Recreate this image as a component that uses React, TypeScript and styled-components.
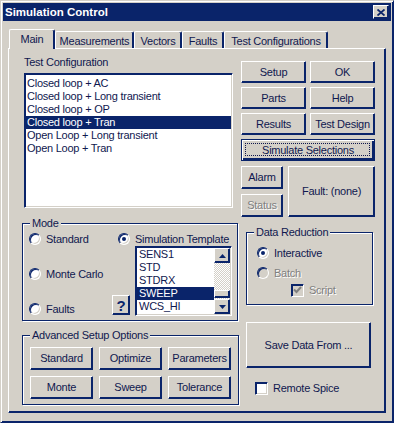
import styled, { createGlobalStyle } from 'styled-components';

const face = '#d4d0c8';
const navy = '#0a246a';
const ink = '#10184f';
const grey = '#808080';

const GlobalStyle = createGlobalStyle`
  * { box-sizing: border-box; }
  html, body { margin: 0; padding: 0; background: ${face}; }
  body {
    font-family: 'Liberation Sans', Arial, sans-serif;
    font-size: 11px;
    line-height: 13px;
    letter-spacing: -0.25px;
    color: ${ink};
  }
`;

const tabs = [
  { label: 'Main', width: 46, active: true },
  { label: 'Measurements', width: 79 },
  { label: 'Vectors', width: 48 },
  { label: 'Faults', width: 42 },
  { label: 'Test Configurations', width: 104 },
];

const configurations = [
  'Closed loop + AC',
  'Closed loop + Long transient',
  'Closed loop + OP',
  'Closed loop + Tran',
  'Open Loop + Long transient',
  'Open Loop + Tran',
];

const templates = ['SENS1', 'STD', 'STDRX', 'SWEEP', 'WCS_HI'];

function Arrow({ down }: { down?: boolean }) {
  return (
    <svg width="7" height="4" viewBox="0 0 7 4">
      <path d={down ? 'M0 0H7L3.5 4Z' : 'M0 4H7L3.5 0Z'} fill={navy} />
    </svg>
  );
}

function Check({ color }: { color: string }) {
  return (
    <svg width="9" height="8" viewBox="0 0 9 8">
      <path d="M1 3.5L3.5 6L8 1" fill="none" stroke={color} strokeWidth="2" />
    </svg>
  );
}

function App() {
  return (
    <>
      <GlobalStyle />
      <Styled.Window>
        <Styled.TitleBar>
          <Styled.Title>Simulation Control</Styled.Title>
          <Styled.CloseButton>
            <svg width="8" height="7" viewBox="0 0 8 7">
              <path d="M0.5 0.5L7.5 6.5M7.5 0.5L0.5 6.5" stroke={navy} strokeWidth="1.8" />
            </svg>
          </Styled.CloseButton>
        </Styled.TitleBar>

        <Styled.Body>
          <Styled.TabRow>
            {tabs.map((tab) => (
              <Styled.Tab key={tab.label} $active={!!tab.active} $width={tab.width}>
                {tab.label}
              </Styled.Tab>
            ))}
          </Styled.TabRow>

          <Styled.Panel>
            <Styled.LeftColumn>
              <Styled.Label>Test Configuration</Styled.Label>
              <Styled.ConfigList>
                <Styled.Rows $padTop={2}>
                  {configurations.map((c) => (
                    <Styled.Item key={c} $selected={c === 'Closed loop + Tran'} $pad={1}>
                      {c}
                    </Styled.Item>
                  ))}
                </Styled.Rows>
              </Styled.ConfigList>

              <Styled.ModeGroup>
                <Styled.Legend>Mode</Styled.Legend>
                <Styled.RadioColumn>
                  <Styled.Choice>
                    <Styled.Radio />
                    Standard
                  </Styled.Choice>
                  <Styled.Choice>
                    <Styled.Radio />
                    Monte Carlo
                  </Styled.Choice>
                  <Styled.Choice>
                    <Styled.Radio />
                    Faults
                  </Styled.Choice>
                </Styled.RadioColumn>
                <Styled.TemplateColumn>
                  <Styled.Choice>
                    <Styled.Radio $checked />
                    Simulation Template
                  </Styled.Choice>
                  <Styled.TemplateRow>
                    <Styled.HelpButton>?</Styled.HelpButton>
                    <Styled.TemplateList>
                      <Styled.Rows $padTop={0}>
                        {templates.map((t) => (
                          <Styled.Item key={t} $selected={t === 'SWEEP'} $pad={2}>
                            {t}
                          </Styled.Item>
                        ))}
                      </Styled.Rows>
                      <Styled.ScrollBar>
                        <Styled.ScrollButton>
                          <Arrow />
                        </Styled.ScrollButton>
                        <Styled.Track>
                          <Styled.Thumb />
                        </Styled.Track>
                        <Styled.ScrollButton>
                          <Arrow down />
                        </Styled.ScrollButton>
                      </Styled.ScrollBar>
                    </Styled.TemplateList>
                  </Styled.TemplateRow>
                </Styled.TemplateColumn>
              </Styled.ModeGroup>

              <Styled.AdvancedGroup>
                <Styled.Legend>Advanced Setup Options</Styled.Legend>
                {['Standard', 'Optimize', 'Parameters', 'Monte', 'Sweep', 'Tolerance'].map((b) => (
                  <Styled.Button key={b}>{b}</Styled.Button>
                ))}
              </Styled.AdvancedGroup>
            </Styled.LeftColumn>

            <Styled.RightColumn>
              <Styled.ButtonGrid>
                <Styled.Button>Setup</Styled.Button>
                <Styled.Button>OK</Styled.Button>
                <Styled.Button>Parts</Styled.Button>
                <Styled.Button>Help</Styled.Button>
                <Styled.Button>Results</Styled.Button>
                <Styled.Button>Test Design</Styled.Button>
                <Styled.DefaultButton>Simulate Selections</Styled.DefaultButton>
              </Styled.ButtonGrid>

              <Styled.AlarmRow>
                <Styled.AlarmStack>
                  <Styled.Button>Alarm</Styled.Button>
                  <Styled.Button disabled>
                    <Styled.Disabled>Status</Styled.Disabled>
                  </Styled.Button>
                </Styled.AlarmStack>
                <Styled.Button>Fault: (none)</Styled.Button>
              </Styled.AlarmRow>

              <Styled.ReductionGroup>
                <Styled.Legend>Data Reduction</Styled.Legend>
                <Styled.Choice>
                  <Styled.Radio $checked />
                  Interactive
                </Styled.Choice>
                <Styled.Choice>
                  <Styled.Radio $disabled />
                  <Styled.Disabled>Batch</Styled.Disabled>
                </Styled.Choice>
                <Styled.ScriptChoice>
                  <Styled.CheckBox $disabled>
                    <Check color={grey} />
                  </Styled.CheckBox>
                  <Styled.Disabled>Script</Styled.Disabled>
                </Styled.ScriptChoice>
              </Styled.ReductionGroup>

              <Styled.SaveButton>Save Data From ...</Styled.SaveButton>

              <Styled.RemoteChoice>
                <Styled.CheckBox />
                Remote Spice
              </Styled.RemoteChoice>
            </Styled.RightColumn>
          </Styled.Panel>
        </Styled.Body>
      </Styled.Window>
    </>
  );
}

export default App;

const raised = `
  background: ${face};
  border: 1px solid;
  border-color: #fff ${navy} ${navy} #fff;
  box-shadow: inset -1px -1px 0 ${navy};
`;

const sunken = `
  border: 1px solid;
  border-color: ${navy} #fff #fff ${navy};
  box-shadow: inset 1px 1px 0 ${navy}, inset -1px -1px 0 ${face};
`;

const Group = styled.div`
  position: relative;
  border: 1px solid ${navy};
  box-shadow: inset 1px 1px 0 #fff, 1px 1px 0 #fff;
`;

const Styled = {
  Window: styled.div`
    width: 394px;
    height: 423px;
    background: ${face};
    border: 1px solid;
    border-color: ${face} ${navy} ${navy} ${face};
    box-shadow: inset 1px 1px 0 #fff, inset -1px -1px 0 ${navy};
    padding: 2px;
    display: flex;
    flex-direction: column;
  `,
  TitleBar: styled.div`
    height: 18px;
    background: ${navy};
    display: flex;
    align-items: center;
    justify-content: space-between;
    padding: 0 2px;
  `,
  Title: styled.span`
    color: #fff;
    font-weight: bold;
    font-size: 11.5px;
    letter-spacing: 0;
  `,
  CloseButton: styled.span`
    ${raised}
    width: 16px;
    height: 14px;
    display: flex;
    align-items: center;
    justify-content: center;
  `,
  Body: styled.div`
    display: flex;
    flex-direction: column;
    padding: 8px 5px 0;
  `,
  TabRow: styled.div`
    display: flex;
    align-items: flex-end;
    height: 19px;
    padding-left: 1px;
  `,
  Tab: styled.div<{ $active: boolean; $width: number }>`
    position: relative;
    z-index: ${({ $active }) => ($active ? 1 : 0)};
    width: ${({ $width }) => $width}px;
    height: ${({ $active }) => ($active ? '20px' : '17px')};
    margin-bottom: ${({ $active }) => ($active ? '-1px' : '0')};
    background: ${face};
    border-top: 1px solid #fff;
    border-left: 1px solid #fff;
    border-right: 1px solid ${navy};
    border-radius: 2px 2px 0 0;
    box-shadow: inset -1px 0 0 ${navy};
    display: flex;
    align-items: center;
    justify-content: center;
    padding-top: ${({ $active }) => ($active ? '0' : '2px')};
    white-space: nowrap;
  `,
  Panel: styled.div`
    position: relative;
    height: 365px;
    border-top: 1px solid #fff;
    border-left: 1px solid #fff;
    border-right: 1px solid ${navy};
    border-bottom: 1px solid ${navy};
    box-shadow: inset -1px -1px 0 ${navy};
    display: grid;
    grid-template-columns: 217px 134px;
    column-gap: 2px;
    align-items: start;
    padding: 7px 0 0 13px;
  `,
  LeftColumn: styled.div`
    display: flex;
    flex-direction: column;
  `,
  RightColumn: styled.div`
    display: flex;
    flex-direction: column;
  `,
  Label: styled.div`
    margin-left: 2px;
    height: 13px;
  `,
  ConfigList: styled.div`
    ${sunken}
    background: #fff;
    width: 209px;
    height: 135px;
    margin: 4px 0 0 2px;
    padding: 1px;
    display: flex;
    overflow: hidden;
  `,
  Rows: styled.div<{ $padTop: number }>`
    flex: 1;
    min-width: 0;
    padding-top: ${({ $padTop }) => $padTop}px;
  `,
  Item: styled.div<{ $selected?: boolean; $pad: number }>`
    height: 13px;
    line-height: 13px;
    padding-left: ${({ $pad }) => $pad}px;
    white-space: nowrap;
    background: ${({ $selected }) => ($selected ? navy : 'transparent')};
    color: ${({ $selected }) => ($selected ? '#fff' : ink)};
  `,
  Legend: styled.span`
    position: absolute;
    top: -7px;
    left: 7px;
    padding: 0 2px;
    height: 13px;
    background: ${face};
    white-space: nowrap;
  `,
  ModeGroup: styled(Group)`
    width: 216px;
    height: 98px;
    margin-top: 15px;
    padding: 9px 0 0 6px;
    display: flex;
  `,
  RadioColumn: styled.div`
    width: 89px;
    display: flex;
    flex-direction: column;
    gap: 23px;
  `,
  TemplateColumn: styled.div`
    display: flex;
    flex-direction: column;
    gap: 1px;
  `,
  TemplateRow: styled.div`
    display: flex;
    align-items: flex-end;
    margin-left: -6px;
  `,
  HelpButton: styled.div`
    ${raised}
    width: 18px;
    height: 20px;
    margin: 0 5px 1px 0;
    display: flex;
    align-items: center;
    justify-content: center;
    font-weight: bold;
    font-size: 15px;
    color: ${navy};
  `,
  TemplateList: styled.div`
    ${sunken}
    background: #fff;
    width: 97px;
    height: 70px;
    padding: 1px;
    display: flex;
    overflow: hidden;
  `,
  ScrollBar: styled.div`
    width: 16px;
    display: flex;
    flex-direction: column;
  `,
  ScrollButton: styled.div`
    ${raised}
    height: 15px;
    display: flex;
    align-items: center;
    justify-content: center;
  `,
  Track: styled.div`
    flex: 1;
    display: flex;
    flex-direction: column;
    justify-content: flex-end;
    background: repeating-conic-gradient(#fff 0 25%, ${face} 0 50%) 0 0 / 2px 2px;
  `,
  Thumb: styled.div`
    ${raised}
    height: 8px;
    margin-bottom: 1px;
  `,
  Choice: styled.label`
    display: flex;
    align-items: center;
    gap: 5px;
    height: 12px;
    white-space: nowrap;
  `,
  Radio: styled.span<{ $checked?: boolean; $disabled?: boolean }>`
    width: 12px;
    height: 12px;
    flex: none;
    border-radius: 50%;
    background: ${({ $disabled }) => ($disabled ? face : '#fff')};
    border: 1px solid;
    border-color: ${navy} #fff #fff ${navy};
    box-shadow: inset 1px 1px 0 ${navy}, inset -1px -1px 0 ${face};
    display: flex;
    align-items: center;
    justify-content: center;

    &::after {
      content: '';
      display: ${({ $checked }) => ($checked ? 'block' : 'none')};
      width: 4px;
      height: 4px;
      border-radius: 50%;
      background: ${navy};
    }
  `,
  CheckBox: styled.span<{ $disabled?: boolean }>`
    ${sunken}
    width: 13px;
    height: 13px;
    flex: none;
    background: ${({ $disabled }) => ($disabled ? face : '#fff')};
    display: flex;
    align-items: center;
    justify-content: center;
  `,
  Disabled: styled.span`
    color: ${grey};
    text-shadow: 1px 1px 0 #fff;
  `,
  AdvancedGroup: styled(Group)`
    width: 217px;
    height: 70px;
    margin-top: 14px;
    padding: 11px 0 0 7px;
    display: grid;
    grid-template-columns: repeat(3, 63px);
    grid-auto-rows: 23px;
    gap: 6px;
  `,
  Button: styled.button`
    ${raised}
    font: inherit;
    color: inherit;
    letter-spacing: inherit;
    padding: 0;
    margin: 0;
    display: flex;
    align-items: center;
    justify-content: center;
    white-space: nowrap;
  `,
  ButtonGrid: styled.div`
    margin-top: 5px;
    display: grid;
    grid-template-columns: 65px 65px;
    grid-auto-rows: 22px;
    gap: 4px;
  `,
  DefaultButton: styled.button`
    position: relative;
    grid-column: 1 / 3;
    background: ${face};
    border: 1px solid ${navy};
    box-shadow: inset 1px 1px 0 #fff, inset -1px -1px 0 ${navy}, inset -2px -2px 0 ${navy};
    font: inherit;
    color: inherit;
    letter-spacing: inherit;
    padding: 0;
    display: flex;
    align-items: center;
    justify-content: center;

    &::after {
      content: '';
      position: absolute;
      inset: 3px 4px 4px 3px;
      border: 1px dotted ${ink};
    }
  `,
  AlarmRow: styled.div`
    margin-top: 5px;
    height: 51px;
    display: grid;
    grid-template-columns: 42px 87px;
    gap: 5px;
  `,
  AlarmStack: styled.div`
    display: grid;
    grid-template-rows: 23px 23px;
    gap: 5px;
  `,
  ReductionGroup: styled(Group)`
    width: 127px;
    height: 73px;
    margin: 15px 0 0 5px;
    padding: 14px 0 0 10px;
    display: flex;
    flex-direction: column;
    gap: 8px;
  `,
  ScriptChoice: styled.label`
    display: flex;
    align-items: center;
    gap: 5px;
    height: 12px;
    margin: -3px 0 0 34px;
  `,
  SaveButton: styled.button`
    ${raised}
    font: inherit;
    color: inherit;
    letter-spacing: inherit;
    width: 125px;
    height: 46px;
    margin: 17px 0 0 5px;
    padding: 0;
  `,
  RemoteChoice: styled.label`
    display: flex;
    align-items: center;
    gap: 5px;
    margin: 14px 0 0 14px;
  `,
};
